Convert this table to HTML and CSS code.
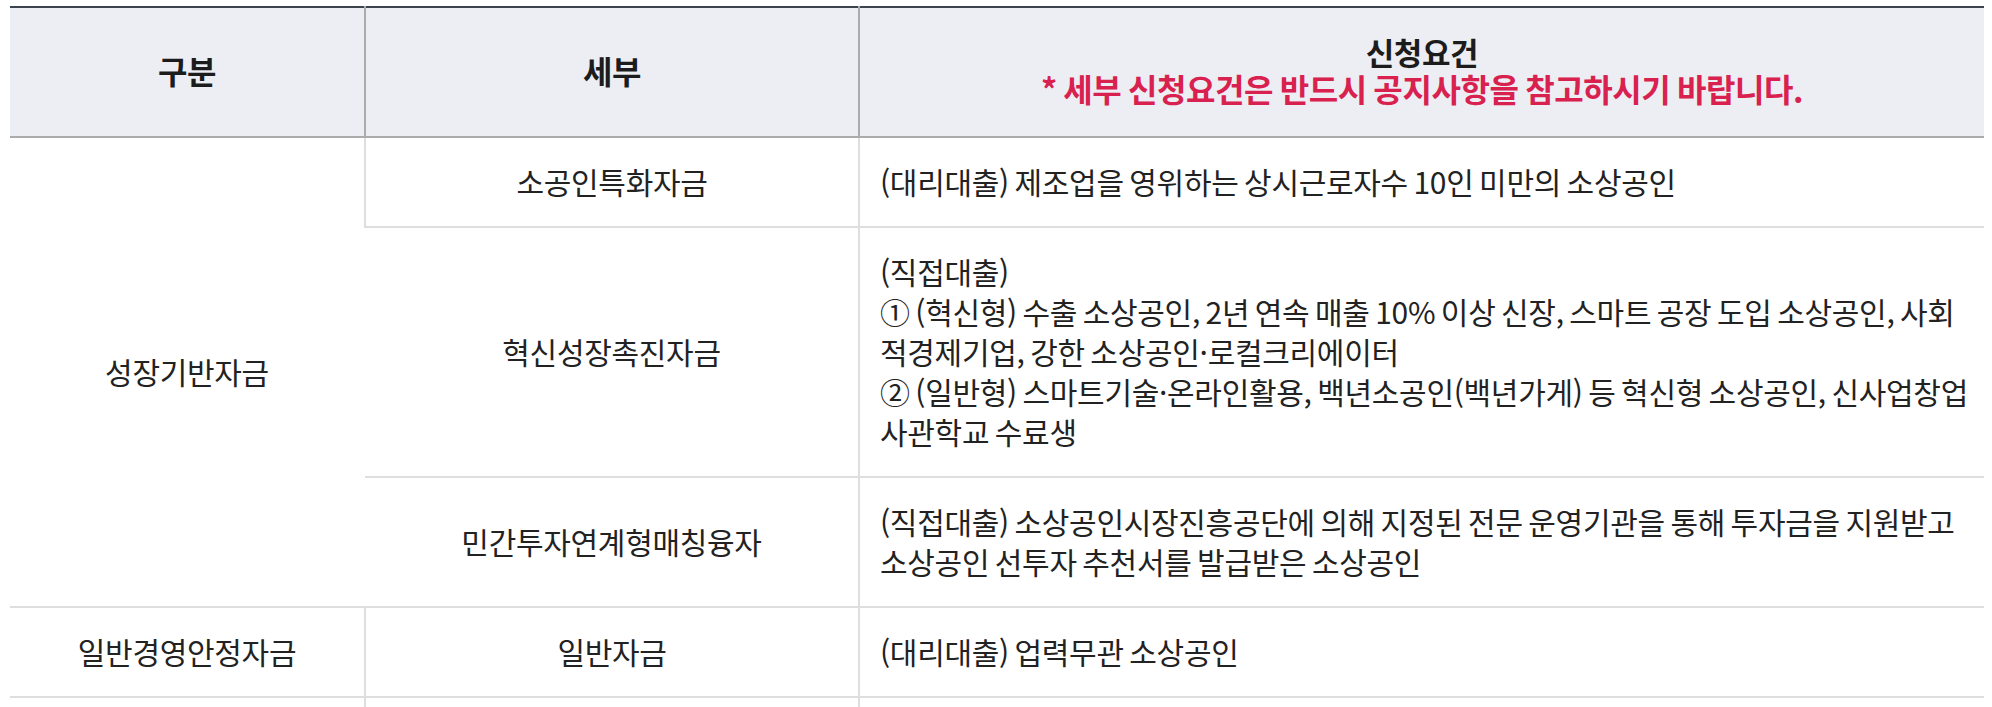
FILE: index.html
```html
<!DOCTYPE html>
<html lang="ko">
<head>
<meta charset="utf-8">
<title>신청요건</title>
<link rel="stylesheet" href="styles.css">
</head>
<body>
<table class="req-table">
  <colgroup>
    <col class="c-type">
    <col class="c-detail">
    <col class="c-req">
  </colgroup>
  <thead>
    <tr>
      <th>구분</th>
      <th>세부</th>
      <th><span class="th-title">신청요건</span><span class="note">* 세부 신청요건은 반드시 공지사항을 참고하시기 바랍니다.</span></th>
    </tr>
  </thead>
  <tbody>
    <tr>
      <td class="center" rowspan="3">성장기반자금</td>
      <td class="center">소공인특화자금</td>
      <td class="left">(대리대출) 제조업을 영위하는 상시근로자수 10인 미만의 소상공인</td>
    </tr>
    <tr>
      <td class="center">혁신성장촉진자금</td>
      <td class="left">(직접대출)<br>① (혁신형) 수출 소상공인, 2년 연속 매출 10% 이상 신장, 스마트 공장 도입 소상공인, 사회<br>적경제기업, 강한 소상공인·로컬크리에이터<br>② (일반형) 스마트기술·온라인활용, 백년소공인(백년가게) 등 혁신형 소상공인, 신사업창업<br>사관학교 수료생</td>
    </tr>
    <tr>
      <td class="center">민간투자연계형매칭융자</td>
      <td class="left">(직접대출) 소상공인시장진흥공단에 의해 지정된 전문 운영기관을 통해 투자금을 지원받고<br>소상공인 선투자 추천서를 발급받은 소상공인</td>
    </tr>
    <tr>
      <td class="center">일반경영안정자금</td>
      <td class="center">일반자금</td>
      <td class="left">(대리대출) 업력무관 소상공인</td>
    </tr>
    <tr>
      <td class="center">&nbsp;</td>
      <td class="center">&nbsp;</td>
      <td class="left">&nbsp;</td>
    </tr>
  </tbody>
</table>
</body>
</html>
```

FILE: styles.css
```css
html, body {
  background: #ffffff;
}
body {
  margin: 0;
  padding: 6px 8px 0 10px;
  font-family: "Noto Sans CJK KR", "Noto Sans", sans-serif;
  color: #222222;
  overflow: hidden;
}
.req-table {
  width: 100%;
  border-collapse: collapse;
  table-layout: fixed;
  border-top: 2px solid #3d434c;
}
.c-type { width: 355px; }
.c-detail { width: 494px; }
.req-table th {
  background: #edeef3;
  font-size: 32px;
  font-weight: 700;
  line-height: 36px;
  padding: 26px 20px 30px;
  text-align: center;
  color: #1c1c1c;
  border-bottom: 2px solid #ababab;
  border-left: 2px solid #ababab;
  letter-spacing: -0.4px;
  word-spacing: -2px;
  white-space: nowrap;
}
.req-table th:first-child { border-left: none; }
.th-title,
.note {
  display: block;
  height: 36px;
}
.th-title {
  font-size: 31px;
}
.note {
  color: #d9214f;
  font-weight: 700;
}
.req-table td {
  font-size: 30px;
  line-height: 40px;
  padding: 23px 20px 25px;
  border-bottom: 2px solid #dedede;
  border-left: 2px solid #dedede;
  vertical-align: middle;
  letter-spacing: -0.3px;
  word-spacing: -2.5px;
  white-space: nowrap;
  color: #222222;
}
.req-table td:first-child { border-left: none; }
.req-table tr td[rowspan] + td { border-left: 2px solid #dedede; }
.center { text-align: center; }
.left { text-align: left; }
```
